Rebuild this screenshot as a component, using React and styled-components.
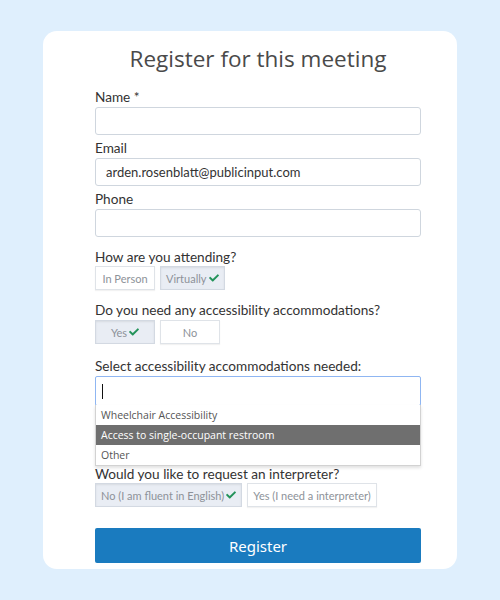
import styled, { createGlobalStyle } from 'styled-components'
import { FaCheck } from 'react-icons/fa'

const GlobalStyle = createGlobalStyle`
  html, body {
    margin: 0;
    padding: 0;
    background: #dfeffd;
    font-family: Lato, 'Liberation Sans', sans-serif;
  }
`

const Page = styled.div`
  width: 500px;
  height: 600px;
  padding-top: 31px;
  box-sizing: border-box;
`

const Card = styled.div`
  width: 414px;
  margin-left: 43px;
  box-sizing: border-box;
  background: #fff;
  border-radius: 14px;
  padding: 14px 36px 6px 52px;
`

const Title = styled.h1`
  margin: 0 0 16px;
  font-family: 'Open Sans', sans-serif;
  font-weight: 400;
  font-size: 22.5px;
  line-height: 28px;
  text-align: center;
  color: #4a4a4a;
`

const Field = styled.div`
  margin-bottom: ${props => props.gap || 5}px;
`

const Label = styled.div`
  font-size: 13.6px;
  line-height: 16px;
  color: #333;
  margin-bottom: ${props => props.tight ? 1 : 2}px;
`

const Input = styled.div`
  height: 28px;
  box-sizing: border-box;
  border: 1px solid #cfd6de;
  border-radius: 3px;
  padding: 0 10px;
  display: flex;
  align-items: center;
  font-size: 13px;
  color: #333;
`

const ToggleRow = styled.div`
  display: flex;
  gap: 5px;
`

const Toggle = styled.div`
  height: 24px;
  min-width: 60px;
  box-sizing: border-box;
  padding: 0 5px;
  display: flex;
  align-items: center;
  justify-content: center;
  gap: 2px;
  font-size: 11px;
  color: #8d9299;
  background: ${props => (props.active ? '#e9edf4' : '#fff')};
  border: 1px solid ${props => (props.active ? '#d3d9e2' : '#dfe3e8')};
  box-shadow: ${props => (props.active ? 'inset 0 1px 2px rgba(0,0,0,0.08)' : '0 1px 1px rgba(0,0,0,0.05)')};
  svg {
    color: #23935a;
    font-size: 10px;
  }
`

const SelectWrap = styled.div`
  position: relative;
`

const SelectInput = styled.div`
  height: 30px;
  box-sizing: border-box;
  border: 1px solid #8fb6f2;
  border-radius: 2px;
  display: flex;
  align-items: center;
  padding-left: 6px;
`

const Caret = styled.span`
  width: 1px;
  height: 15px;
  background: #111;
`

const Menu = styled.div`
  position: absolute;
  top: 29px;
  left: 0;
  right: 0;
  background: #fff;
  border: 1px solid #d2d2d2;
  border-top: none;
  box-shadow: 0 2px 3px rgba(0, 0, 0, 0.12);
  z-index: 2;
`

const Option = styled.div`
  height: 20px;
  display: flex;
  align-items: center;
  padding-left: 5px;
  font-family: 'Open Sans', sans-serif;
  font-size: 10.5px;
  color: ${props => (props.highlight ? '#fff' : '#555')};
  background: ${props => (props.highlight ? '#6f6f6f' : '#fff')};
`

const Submit = styled.button`
  display: block;
  width: 100%;
  height: 35px;
  margin-top: 21px;
  border: none;
  border-radius: 2px;
  background: #1a7bbf;
  color: #fff;
  font-family: 'Noto Sans', sans-serif;
  font-size: 15px;
`

const attendOptions = [
  { label: 'In Person', active: false },
  { label: 'Virtually', active: true },
]

const accessOptions = [
  { label: 'Yes', active: true },
  { label: 'No', active: false },
]

const interpreterOptions = [
  { label: 'No (I am fluent in English)', active: true },
  { label: 'Yes (I need a interpreter)', active: false },
]

const menuItems = ['Wheelchair Accessibility', 'Access to single-occupant restroom', 'Other']

function Toggles({ options }) {
  return (
    <ToggleRow>
      {options.map(o => (
        <Toggle key={o.label} active={o.active}>
          {o.label}
          {o.active && <FaCheck />}
        </Toggle>
      ))}
    </ToggleRow>
  )
}

export default function App() {
  return (
    <Page>
      <GlobalStyle />
      <Card>
        <Title>Register for this meeting</Title>
        <Field>
          <Label>Name *</Label>
          <Input />
        </Field>
        <Field>
          <Label>Email</Label>
          <Input>arden.rosenblatt@publicinput.com</Input>
        </Field>
        <Field gap={12}>
          <Label>Phone</Label>
          <Input />
        </Field>
        <Field gap={12}>
          <Label tight>How are you attending?</Label>
          <Toggles options={attendOptions} />
        </Field>
        <Field gap={14}>
          <Label>Do you need any accessibility accommodations?</Label>
          <Toggles options={accessOptions} />
        </Field>
        <Field gap={60}>
          <Label>Select accessibility accommodations needed:</Label>
          <SelectWrap>
            <SelectInput>
              <Caret />
            </SelectInput>
            <Menu>
              {menuItems.map(item => (
                <Option key={item} highlight={item === 'Access to single-occupant restroom'}>
                  {item}
                </Option>
              ))}
            </Menu>
          </SelectWrap>
        </Field>
        <Field gap={0}>
          <Label tight>Would you like to request an interpreter?</Label>
          <Toggles options={interpreterOptions} />
        </Field>
        <Submit>Register</Submit>
      </Card>
    </Page>
  )
}
